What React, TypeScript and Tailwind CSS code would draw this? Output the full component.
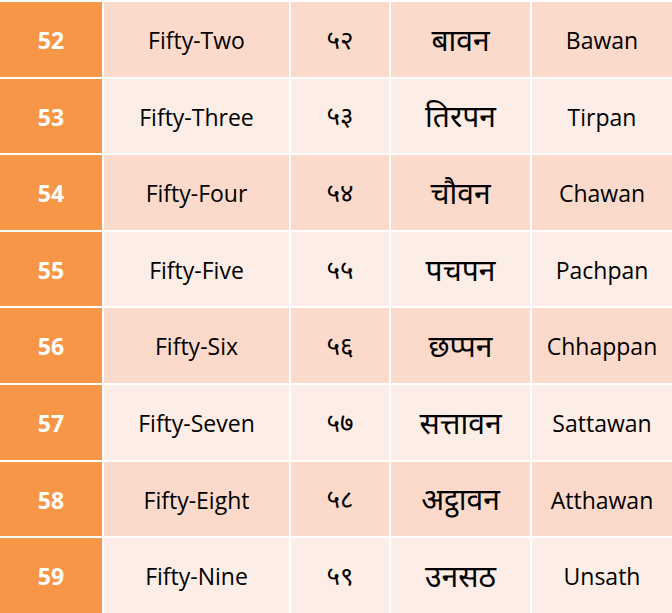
import React from 'react';

const rows = [
  ['52', 'Fifty-Two', '५२', 'बावन', 'Bawan'],
  ['53', 'Fifty-Three', '५३', 'तिरपन', 'Tirpan'],
  ['54', 'Fifty-Four', '५४', 'चौवन', 'Chawan'],
  ['55', 'Fifty-Five', '५५', 'पचपन', 'Pachpan'],
  ['56', 'Fifty-Six', '५६', 'छप्पन', 'Chhappan'],
  ['57', 'Fifty-Seven', '५७', 'सत्तावन', 'Sattawan'],
  ['58', 'Fifty-Eight', '५८', 'अट्ठावन', 'Atthawan'],
  ['59', 'Fifty-Nine', '५९', 'उनसठ', 'Unsath'],
];

const App: React.FC = () => {
  return (
    <div
      className="w-[672px] h-[613px] overflow-hidden bg-white pt-[2px]"
      style={{ fontFamily: '"Open Sans", "Noto Sans", "Noto Sans Devanagari", sans-serif' }}
    >
      <div className="grid grid-cols-[102px_185px_98px_139px_1fr] gap-x-[2px] gap-y-[2px] auto-rows-[74.6px]">
        {rows.map((r, i) => {
          const band = i % 2 === 0 ? 'bg-[#fbdacb]' : 'bg-[#fdede7]';
          return (
            <React.Fragment key={r[0]}>
              <div className="bg-[#f79646] flex items-center justify-center text-white font-bold text-[23px] pt-[2px]">
                {r[0]}
              </div>
              <div className={`${band} flex items-center justify-center text-black text-[23px] pt-[2px]`}>{r[1]}</div>
              <div className={`${band} flex items-center justify-center text-black text-[26px]`}>{r[2]}</div>
              <div className={`${band} flex items-center justify-center text-black text-[30px]`}>{r[3]}</div>
              <div className={`${band} flex items-center justify-center text-black text-[23px] pt-[2px]`}>{r[4]}</div>
            </React.Fragment>
          );
        })}
      </div>
    </div>
  );
};

export default App;
